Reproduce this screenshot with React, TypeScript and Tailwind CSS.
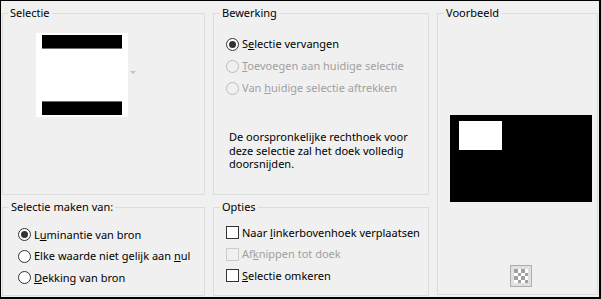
const font = { fontFamily: '"Noto Sans", "Open Sans", sans-serif' };

function Radio({ checked, disabled }: { checked?: boolean; disabled?: boolean }) {
  return (
    <span
      className={`flex size-[13px] shrink-0 items-center justify-center rounded-full border ${
        disabled ? "border-[#bcbcbc] bg-[#f0f0f0]" : "border-[#333] bg-white"
      }`}
    >
      {checked && <span className="size-[7px] rounded-full bg-[#333]" />}
    </span>
  );
}

function Check({ disabled }: { disabled?: boolean }) {
  return (
    <span
      className={`size-[13px] shrink-0 border ${
        disabled ? "border-[#cccccc] bg-[#f0f0f0]" : "border-[#333] bg-white"
      }`}
    />
  );
}

function Group({
  label,
  className,
  legendClass = "ml-[6px]",
  children,
}: {
  label: string;
  className?: string;
  legendClass?: string;
  children: React.ReactNode;
}) {
  return (
    <fieldset className={`min-w-0 border border-[#dcdcdc] ${className ?? ""}`}>
      <legend className={`${legendClass} whitespace-nowrap px-[2px] text-[11px] leading-4 text-black`}>
        {label}
      </legend>
      {children}
    </fieldset>
  );
}

function Row({
  children,
  disabled,
  h = "h-[22px]",
}: {
  children: React.ReactNode;
  disabled?: boolean;
  h?: string;
}) {
  return (
    <div
      className={`flex ${h} items-center gap-[3px] whitespace-nowrap text-[11px] ${
        disabled ? "text-[#a0a0a0]" : "text-black"
      }`}
    >
      {children}
    </div>
  );
}

export default function App() {
  return (
    <div
      style={font}
      className="grid h-[299px] w-[601px] grid-cols-[203px_216px_161px] grid-rows-[190px_97px] gap-x-[8px] gap-y-[4px] border-t border-l border-r-2 border-b-2 border-black bg-[#f0f0f0] pt-[4px] pl-[1px]"
    >
      <Group label="Selectie" legendClass="ml-[5px]">
        <div className="mt-[12px] ml-[33px] flex items-center gap-[2px]">
          <div className="flex h-[84px] w-[92px] flex-col justify-between bg-white px-[6px] py-[2px]">
            <div className="h-[14px] border-b border-[#6e6e6e] bg-black" />
            <div className="h-[14px] border-t border-[#6e6e6e] bg-black" />
          </div>
          <svg width="6" height="4" viewBox="0 0 6 4" className="mt-[-4px]">
            <path d="M0 0H6L3 3Z" fill="#c4c4c4" />
          </svg>
        </div>
      </Group>

      <Group label="Bewerking">
        <div className="mt-[12px] ml-[12px]">
          <Row>
            <Radio checked />
            <span>
              S<u>e</u>lectie vervangen
            </span>
          </Row>
          <Row disabled>
            <Radio disabled />
            <span>
              <u>T</u>oevoegen aan huidige selectie
            </span>
          </Row>
          <Row disabled>
            <Radio disabled />
            <span>
              Van <u>h</u>uidige selectie aftrekken
            </span>
          </Row>
        </div>
        <p className="mt-[31px] ml-[15px] whitespace-nowrap text-[11px] leading-[13.5px] text-black">
          De oorspronkelijke rechthoek voor
          <br />
          deze selectie zal het doek volledig
          <br />
          doorsnijden.
        </p>
      </Group>

      <Group label="Voorbeeld" className="row-span-2 mb-[1px]">
        <div className="mt-[94px] ml-[12px] flex w-[142px] flex-col items-center">
          <div className="h-[87px] w-[142px] bg-black pt-[6px] pl-[9px]">
            <div className="h-[29px] w-[43px] bg-white" />
          </div>
          <div className="mt-[63px] flex size-[22px] items-center justify-center border border-[#adadad] bg-[#e1e1e1]">
            <svg width="14" height="14" viewBox="0 0 4 4" shapeRendering="crispEdges">
              <rect width="4" height="4" fill="#ffffff" />
              <path d="M0 0h1v1H0zM2 0h1v1H2zM1 1h1v1H1zM3 1h1v1H3zM0 2h1v1H0zM2 2h1v1H2zM1 3h1v1H1zM3 3h1v1H3z" fill="#a0a0a0" />
            </svg>
          </div>
        </div>
      </Group>

      <Group label="Selectie maken van:" legendClass="ml-[6px]">
        <div className="mt-[9px] ml-[15px]">
          <Row h="h-[21.5px]">
            <Radio checked />
            <span>
              L<u>u</u>minantie van bron
            </span>
          </Row>
          <Row h="h-[21.5px]">
            <Radio />
            <span>
              Elke waarde niet gelijk aan <u>n</u>ul
            </span>
          </Row>
          <Row h="h-[21.5px]">
            <Radio />
            <span>
              <u>D</u>ekking van bron
            </span>
          </Row>
        </div>
      </Group>

      <Group label="Opties">
        <div className="mt-[7px] ml-[12px]">
          <Row h="h-[21.5px]">
            <Check />
            <span>
              Naar <u>l</u>inkerbovenhoek verplaatsen
            </span>
          </Row>
          <Row h="h-[21.5px]" disabled>
            <Check disabled />
            <span>
              Af<u>k</u>nippen tot doek
            </span>
          </Row>
          <Row h="h-[21.5px]">
            <Check />
            <span>
              <u>S</u>electie omkeren
            </span>
          </Row>
        </div>
      </Group>
    </div>
  );
}
